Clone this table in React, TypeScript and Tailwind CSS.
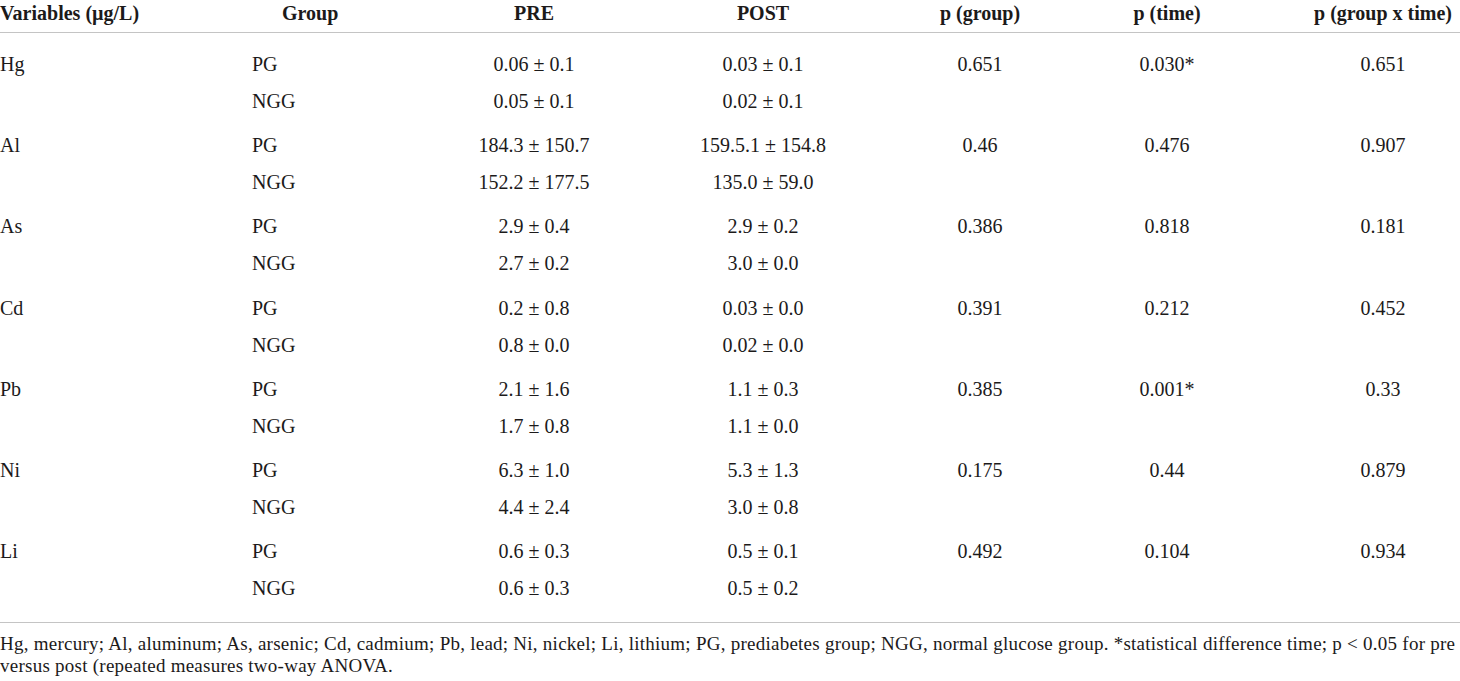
const rows = [
  { v: 'Hg', pg: ['0.06 ± 0.1', '0.03 ± 0.1'], ngg: ['0.05 ± 0.1', '0.02 ± 0.1'], p: ['0.651', '0.030*', '0.651'] },
  { v: 'Al', pg: ['184.3 ± 150.7', '159.5.1 ± 154.8'], ngg: ['152.2 ± 177.5', '135.0 ± 59.0'], p: ['0.46', '0.476', '0.907'] },
  { v: 'As', pg: ['2.9 ± 0.4', '2.9 ± 0.2'], ngg: ['2.7 ± 0.2', '3.0 ± 0.0'], p: ['0.386', '0.818', '0.181'] },
  { v: 'Cd', pg: ['0.2 ± 0.8', '0.03 ± 0.0'], ngg: ['0.8 ± 0.0', '0.02 ± 0.0'], p: ['0.391', '0.212', '0.452'] },
  { v: 'Pb', pg: ['2.1 ± 1.6', '1.1 ± 0.3'], ngg: ['1.7 ± 0.8', '1.1 ± 0.0'], p: ['0.385', '0.001*', '0.33'] },
  { v: 'Ni', pg: ['6.3 ± 1.0', '5.3 ± 1.3'], ngg: ['4.4 ± 2.4', '3.0 ± 0.8'], p: ['0.175', '0.44', '0.879'] },
  { v: 'Li', pg: ['0.6 ± 0.3', '0.5 ± 0.1'], ngg: ['0.6 ± 0.3', '0.5 ± 0.2'], p: ['0.492', '0.104', '0.934'] },
];

const cols = 'grid grid-cols-[252px_168px_228px_230px_204px_170px_208px]';

function Row({ v, group, vals, p }: { v?: string; group: string; vals: string[]; p?: string[] }) {
  return (
    <div className={`${cols} h-[24px] leading-[24px]`}>
      <div>{v}</div>
      <div>{group}</div>
      <div className="text-center">{vals[0]}</div>
      <div className="text-center">{vals[1]}</div>
      <div className="text-center">{p?.[0]}</div>
      <div className="text-center">{p?.[1]}</div>
      <div className="pl-[54px] text-center">{p?.[2]}</div>
    </div>
  );
}

export default function App() {
  return (
    <div className="w-[1460px] h-[681px] overflow-hidden bg-white text-[#1c1a1a] font-['Liberation_Serif',serif] text-[20px]">
      <div className={`${cols} pt-[1px] pb-[7px] h-[33px] leading-[24px] font-bold border-b border-[#c4c4c4]`}>
        <div>Variables (µg/L)</div>
        <div className="pl-[30px]">Group</div>
        <div className="text-center">PRE</div>
        <div className="text-center">POST</div>
        <div className="text-center">p (group)</div>
        <div className="text-center">p (time)</div>
        <div className="pl-[54px] text-center">p (group x time)</div>
      </div>
      <div className="pb-[21px] border-b border-[#c4c4c4]">
        {rows.map((r) => (
          <div key={r.v} className="flex flex-col gap-[13px] pt-[19px] pb-[1.2px]">
            <Row v={r.v} group="PG" vals={r.pg} p={r.p} />
            <Row group="NGG" vals={r.ngg} />
          </div>
        ))}
      </div>
      <p className="pt-[10px] text-[19px] tracking-[0.25px] leading-[22px] whitespace-nowrap">
        Hg, mercury; Al, aluminum; As, arsenic; Cd, cadmium; Pb, lead; Ni, nickel; Li, lithium; PG, prediabetes group; NGG, normal glucose group. *statistical difference time; p &lt; 0.05 for pre
        <br />
        versus post (repeated measures two-way ANOVA.
      </p>
    </div>
  );
}
